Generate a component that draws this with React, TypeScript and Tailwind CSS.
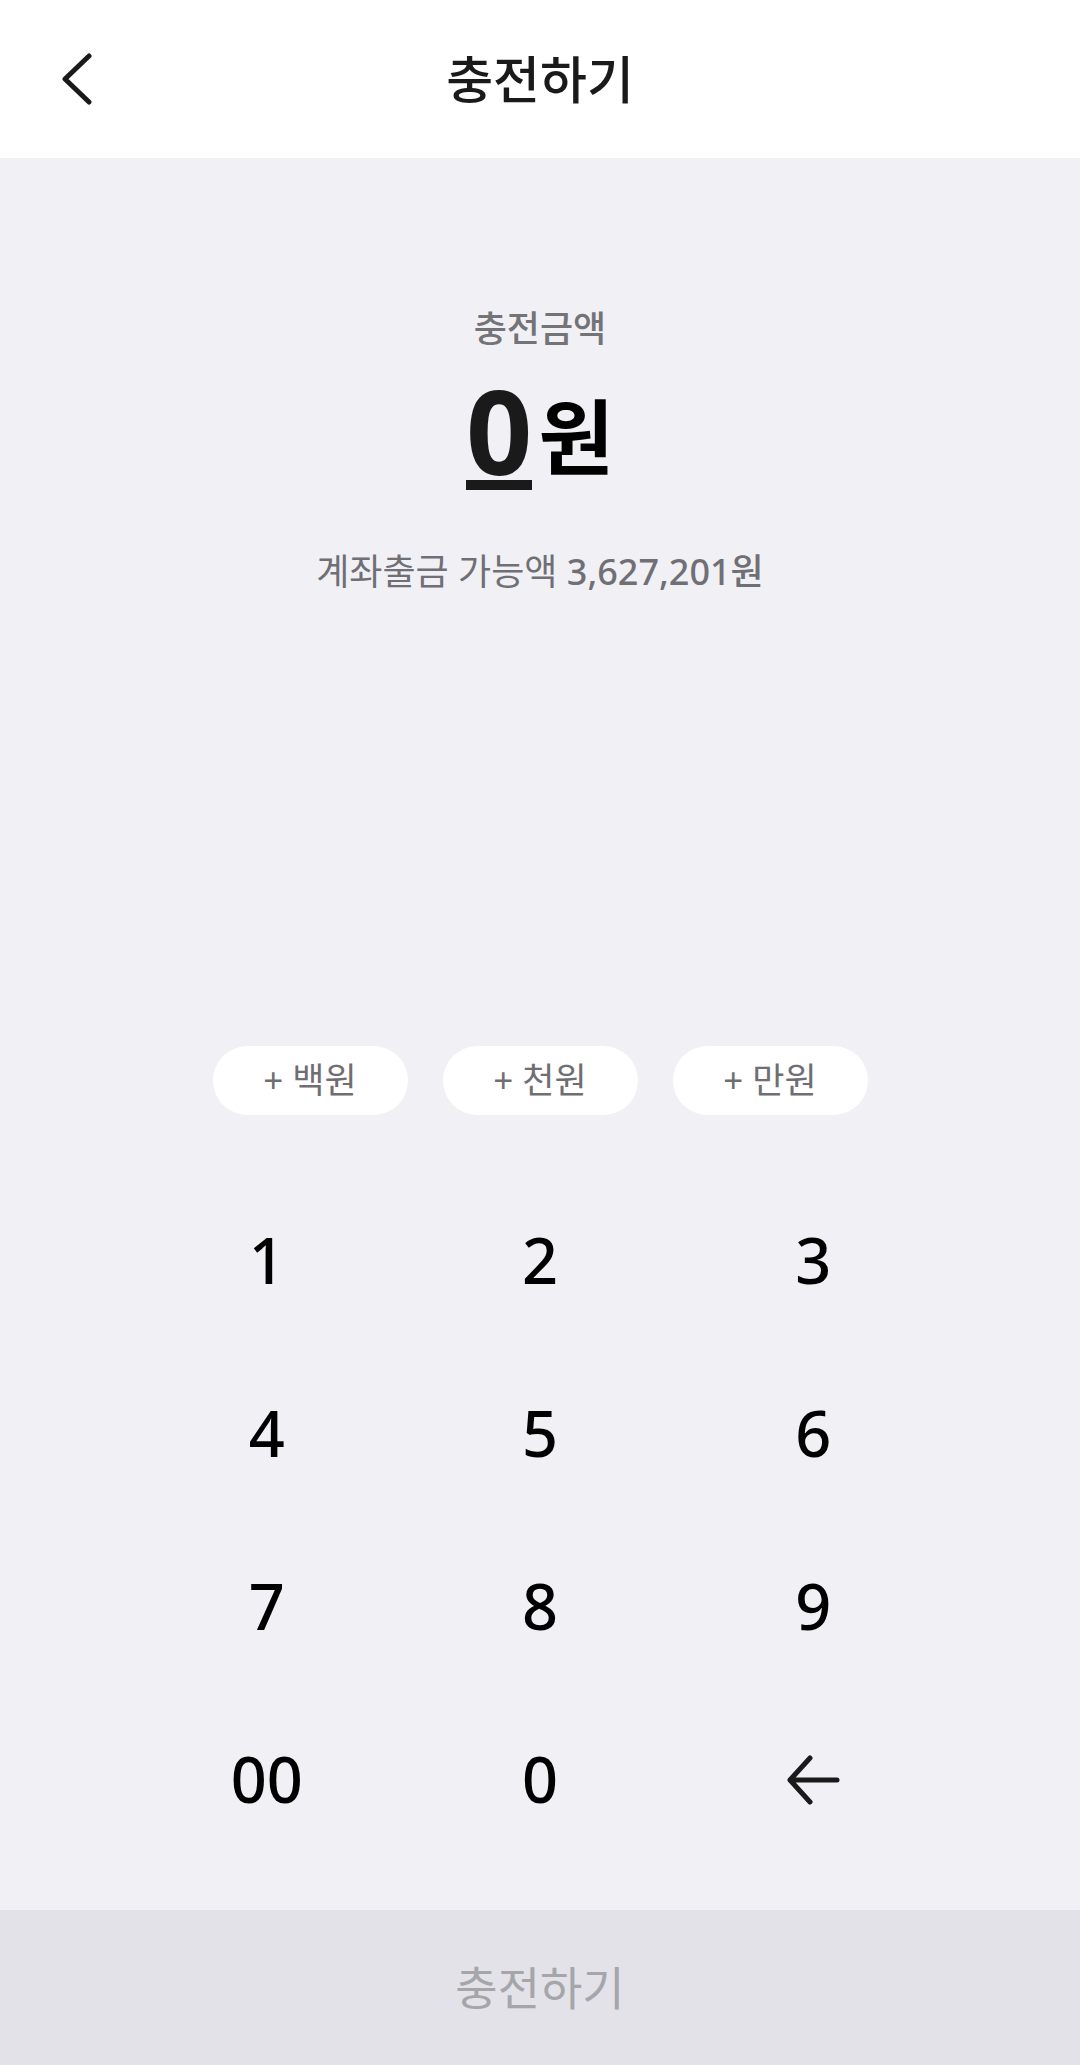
import React, { useState } from "react";

const font = { fontFamily: '"Noto Sans", "Noto Sans CJK KR", sans-serif' };

const keys = ["1", "2", "3", "4", "5", "6", "7", "8", "9", "00", "0", "back"];

const chips = [
  { label: "백원", value: 100 },
  { label: "천원", value: 1000 },
  { label: "만원", value: 10000 },
];

const App: React.FC = () => {
  const [amount, setAmount] = useState("0");

  const handleKey = (k: string) => {
    if (k === "back") {
      setAmount((a) => (a.length <= 1 ? "0" : a.slice(0, -1)));
      return;
    }
    setAmount((a) => (a === "0" ? k.replace(/^0+/, "") || "0" : a + k));
  };

  const addAmount = (v: number) => {
    setAmount((a) => String(Number(a) + v));
  };

  const display = Number(amount).toLocaleString("ko-KR");

  return (
    <div className="w-full h-[2065px] flex flex-col bg-[#f1f1f5]" style={font}>
      {/* Header */}
      <header className="h-[158px] bg-white flex items-center relative shrink-0">
        <button className="absolute left-[58px] top-[53px] w-[36px] h-[52px] flex items-center justify-center">
          <svg width="32" height="52" viewBox="0 0 32 52" fill="none">
            <path
              d="M29 3 L5 26 L29 49"
              stroke="#1a1a1a"
              strokeWidth="5"
              strokeLinecap="round"
              strokeLinejoin="round"
            />
          </svg>
        </button>
        <h1 className="w-full text-center text-[51px] font-medium text-[#1a1a1a] leading-none">
          충전하기
        </h1>
      </header>

      {/* Amount */}
      <main className="flex-1 flex flex-col items-center">
        <p className="mt-[150px] text-[36px] leading-[42px] font-medium text-[#737378]">
          충전금액
        </p>

        <div className="mt-[22px] flex items-start justify-center">
          <div className="flex flex-col items-center">
            <span className="text-[116px] font-bold leading-[116px] text-[#1a1a1a]">
              {display}
            </span>
            <div className="h-[10px] w-[66px] bg-[#1a1a1a] -mt-[8px]" />
          </div>
          <span className="ml-[6px] mt-[16px] text-[82px] font-bold leading-[96px] text-black">
            원
          </span>
        </div>

        <p className="mt-[61px] text-[36px] leading-[42px] text-[#6f6f75]">
          계좌출금 가능액 <span className="font-medium">3,627,201원</span>
        </p>

        {/* Quick add chips */}
        <div className="mt-[453px] flex gap-[35px]">
          {chips.map((c) => (
            <button
              key={c.label}
              onClick={() => addAmount(c.value)}
              className="w-[195px] h-[69px] rounded-full bg-white flex items-center justify-center text-[35px] text-[#6e6e73]"
            >
              + {c.label}
            </button>
          ))}
        </div>

        {/* Keypad */}
        <div className="mt-[59px] w-[820px] grid grid-cols-3">
          {keys.map((k) => (
            <button
              key={k}
              onClick={() => handleKey(k)}
              className="h-[173px] flex items-center justify-center text-[63px] font-medium text-black"
            >
              {k === "back" ? (
                <svg width="56" height="50" viewBox="0 0 56 50" fill="none">
                  <path
                    d="M52 25 H5 M25 3 L5 25 L25 47"
                    stroke="#1a1a1a"
                    strokeWidth="5"
                    strokeLinecap="round"
                    strokeLinejoin="round"
                  />
                </svg>
              ) : (
                k
              )}
            </button>
          ))}
        </div>
      </main>

      {/* Submit */}
      <button
        disabled={amount === "0"}
        className="h-[155px] shrink-0 w-full bg-[#e2e2e8] text-[46px] text-[#a5a5aa] flex items-center justify-center"
      >
        충전하기
      </button>
    </div>
  );
};

export default App;
